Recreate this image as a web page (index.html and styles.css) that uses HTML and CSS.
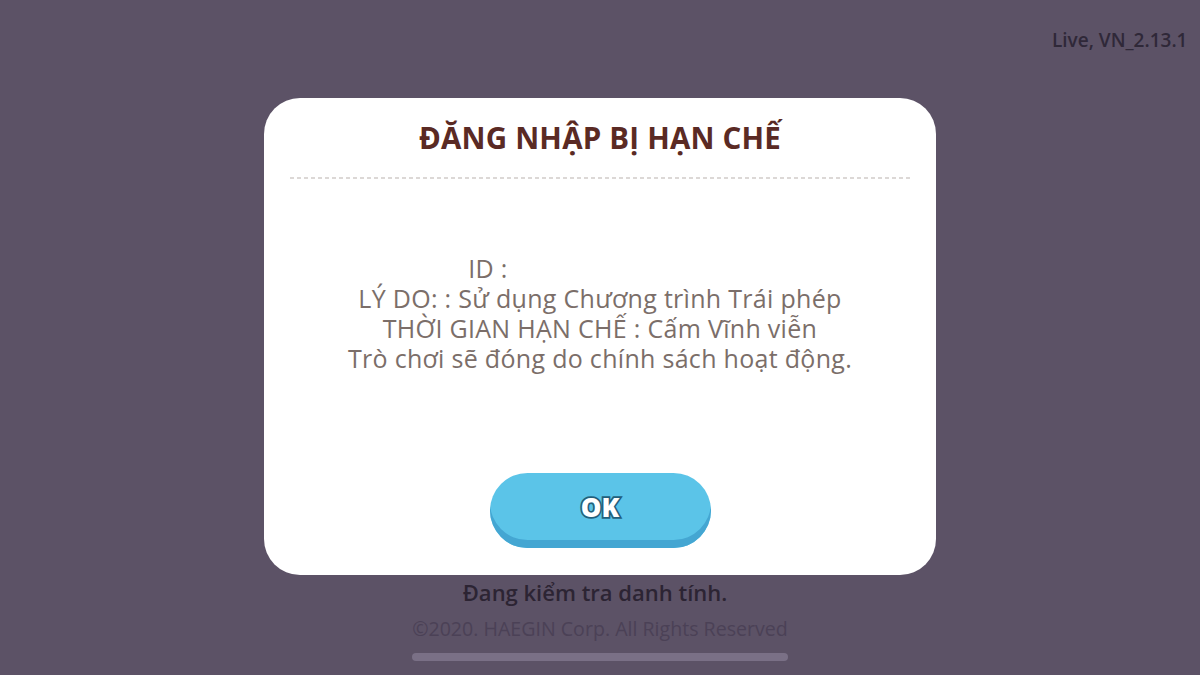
FILE: index.html
```html
<!DOCTYPE html>
<html lang="vi">
<head>
<meta charset="utf-8">
<title>Đăng nhập bị hạn chế</title>
<link rel="stylesheet" href="styles.css">
</head>
<body>
<div class="screen">
  <div class="version">Live, VN_2.13.1</div>
  <div class="dialog">
    <h1 class="title">ĐĂNG NHẬP BỊ HẠN CHẾ</h1>
    <div class="body">
      <p class="line"><span>ID :</span><span class="redacted"></span></p>
      <p class="line">LÝ DO: : Sử dụng Chương trình Trái phép</p>
      <p class="line">THỜI GIAN HẠN CHẾ : Cấm Vĩnh viễn</p>
      <p class="line">Trò chơi sẽ đóng do chính sách hoạt động.</p>
    </div>
    <div class="actions">
      <button class="ok">OK</button>
    </div>
  </div>
  <div class="status">Đang kiểm tra danh tính.</div>
  <div class="copyright">©2020. HAEGIN Corp. All Rights Reserved</div>
  <div class="progress"></div>
</div>
</body>
</html>
```
FILE: styles.css
```css
html, body {
  margin: 0;
  padding: 0;
}
body {
  background: #5c5266;
  font-family: "Open Sans", "Noto Sans", sans-serif;
}
.screen {
  width: 1200px;
  height: 675px;
  overflow: hidden;
  display: flex;
  flex-direction: column;
  align-items: center;
  background: #5c5266;
}
.version {
  align-self: stretch;
  padding-left: 1052px;
  height: 98px;
  box-sizing: border-box;
  padding-top: 27px;
  white-space: nowrap;
  font-size: 19px;
  line-height: 26px;
  color: #2f2838;
  font-weight: 600;
}
.dialog {
  width: 672px;
  height: 477px;
  box-sizing: border-box;
  background: #ffffff;
  border-radius: 36px;
  padding: 0 26px;
  display: flex;
  flex-direction: column;
}
.title {
  margin: 20px 0 0;
  height: 61px;
  box-sizing: border-box;
  line-height: 40px;
  text-align: center;
  font-family: "Open Sans", sans-serif;
  font-weight: 700;
  font-size: 29.5px;
  color: #5a2a24;
  letter-spacing: 0.2px;
  background-image: linear-gradient(90deg, #dcd8d6 0 4px, transparent 4px 7px);
  background-size: 7px 2px;
  background-repeat: repeat-x;
  background-position: 0 100%;
}
.body {
  height: 294px;
  box-sizing: border-box;
  padding-bottom: 26px;
  display: flex;
  flex-direction: column;
  justify-content: center;
  align-items: center;
  flex-shrink: 0;
}
.line {
  margin: 0;
  font-size: 25px;
  letter-spacing: 0.3px;
  line-height: 30px;
  color: #7b6e69;
  text-align: center;
  white-space: nowrap;
}
.redacted {
  display: inline-block;
  width: 224px;
}
.actions {
  display: flex;
  justify-content: center;
}
.ok {
  width: 221px;
  height: 75px;
  border: none;
  border-radius: 38px;
  background: #5bc4e8;
  box-shadow: inset 0 -8px 0 #44a6d2;
  padding: 0 0 8px;
  font-family: "Open Sans", sans-serif;
  font-weight: 800;
  font-size: 26px;
  color: #ffffff;
  -webkit-text-stroke: 3.5px #22607c;
  paint-order: stroke fill;
  cursor: pointer;
}
.status {
  margin-top: 3px;
  font-size: 22px;
  line-height: 28px;
  font-weight: 600;
  color: #2c2433;
  margin-right: 10px;
}
.copyright {
  margin-top: 10px;
  font-size: 19.6px;
  line-height: 26px;
  color: #4b4156;
}
.progress {
  margin-top: 11px;
  width: 376px;
  height: 8px;
  border-radius: 4px;
  background: #7a7086;
}
```
